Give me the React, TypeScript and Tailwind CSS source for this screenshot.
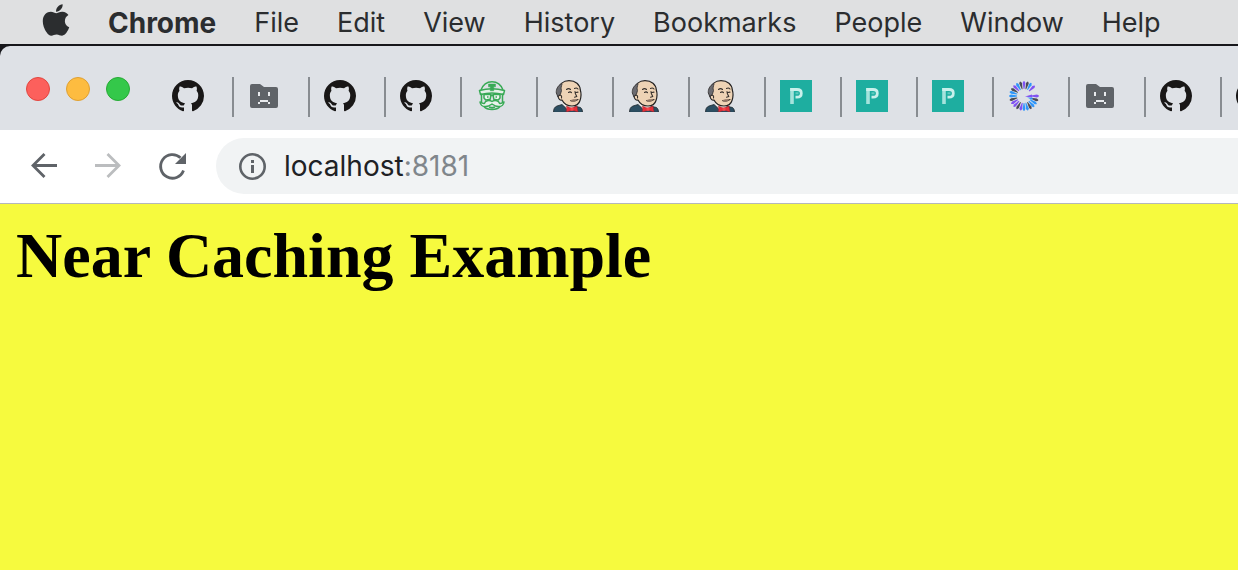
import React from "react";
import { FaApple } from "react-icons/fa";

const ui = "font-['Inter','Liberation_Sans',sans-serif]";

const menus = ["File", "Edit", "View", "History", "Bookmarks", "People", "Window", "Help"];

type TabKind = "github" | "crash" | "travis" | "jenkins" | "p" | "burst";

const tabs: TabKind[] = [
  "github", "crash", "github", "github", "travis", "jenkins", "jenkins", "jenkins",
  "p", "p", "p", "burst", "crash", "github", "github",
];

function GithubIcon() {
  return (
    <svg viewBox="0 0 16 16" className="size-8 shrink-0" fill="#191717" aria-hidden="true">
      <path d="M8 0C3.58 0 0 3.58 0 8c0 3.54 2.29 6.53 5.47 7.59.4.07.55-.17.55-.38 0-.19-.01-.82-.01-1.49-2.01.37-2.53-.49-2.69-.94-.09-.23-.48-.94-.82-1.13-.28-.15-.68-.52-.01-.53.63-.01 1.08.58 1.23.82.72 1.21 1.87.87 2.33.66.07-.52.28-.87.51-1.07-1.78-.2-3.64-.89-3.64-3.95 0-.87.31-1.59.82-2.15-.08-.2-.36-1.02.08-2.12 0 0 .67-.21 2.2.82.64-.18 1.32-.27 2-.27s1.36.09 2 .27c1.53-1.04 2.2-.82 2.2-.82.44 1.1.16 1.92.08 2.12.51.56.82 1.27.82 2.15 0 3.07-1.87 3.75-3.65 3.95.29.25.54.73.54 1.48 0 1.07-.01 1.93-.01 2.2 0 .21.15.46.55.38A8.01 8.01 0 0 0 16 8c0-4.42-3.58-8-8-8z" />
    </svg>
  );
}

function CrashIcon() {
  return (
    <svg viewBox="0 0 32 32" className="size-8 shrink-0" aria-hidden="true">
      <path d="M4 4h8l4 3h12a2 2 0 0 1 2 2v17a2 2 0 0 1-2 2H4a2 2 0 0 1-2-2V6a2 2 0 0 1 2-2z" fill="#5f6368" />
      <path d="M10 12h2v4h-2zM20 12h2v4h-2zM12 20h8v2h-8zM10 22h2v2h-2zM20 22h2v2h-2z" fill="#e8eaed" />
    </svg>
  );
}

function TravisIcon() {
  return (
    <svg viewBox="0 0 32 32" className="size-8 shrink-0" fill="none" stroke="#39aa56" strokeWidth="1.500" strokeLinejoin="round" aria-hidden="true">
      <path d="M5 10C7 4.500 11 1.700 16 1.700S25 4.500 27 10" />
      <path d="M3.500 10.500C11 8.500 21 8.500 28.500 10.500L27.500 14.500C20 12.500 12 12.500 4.500 14.500Z" fill="#e4efe7" />
      <path d="M12.500 4h7v2.800h-1.800v4h-3.400v-4h-1.800z" fill="#39aa56" strokeWidth=".5" />
      <path d="M5.500 13.500V22M26.500 13.500V22" />
      <path d="M8 14.500h7l-.8 4.700-4.500.8L8 18zM17 14.500h7V18l-1.700 2-4.500-.8z" fill="#eef5f0" />
      <path d="M11 17h1.500M19.500 17H21M15 15.500h2" />
      <path d="M16 21.500C13 19.500 9 21 8.500 23.300 7 24 5.500 22.500 4 22c.5 3 2.500 4.500 5 4.500 3 .2 5-1 7-2.500 2 1.500 4 2.700 7 2.500 2.500 0 4.500-1.500 5-4.500-1.500.5-3 2-4.500 1.300C23 21 19 19.500 16 21.500z" fill="#e9f2eb" />
      <path d="M8 26.500C10 29 13 29.500 16 29.500s6-.5 8-3M13 27l3 .8 3-.8" />
    </svg>
  );
}

function JenkinsIcon() {
  return (
    <svg viewBox="0 0 32 32" className="size-8 shrink-0" strokeLinejoin="round" strokeLinecap="round" aria-hidden="true">
      <path d="M1.500 32c0-3 1-5 3.500-6l5-1.500L16 30l8-3.500 4.500 1c1.500 1 2 3 2 4.500z" fill="#2c4e62" stroke="#20282d" strokeWidth=".8" />
      <path d="M10 22l5 7 7-1.500V24z" fill="#f3f1ec" />
      <path d="M6 10C7 4 11.500.7 17 .7 23.500.7 28 4.500 28.300 10c1 3 .9 7-.3 10.500-1 3.500-4 5.500-8 5.500-4.500 0-8-2-10-6-2 .5-3.500-1-4-3.500C6 15 5.500 13 6 10z" fill="#eed3b5" stroke="#252323" strokeWidth="1.200" />
      <path d="M9 3.800C5.500 6 4 9.500 4.300 13l1.700 4 2.500-3 1-3.500C8.500 8.500 9.500 6 10 4z" fill="#6b6b70" stroke="#393737" strokeWidth=".9" />
      <path d="M7 15.500c2-1 3 .5 2.500 2.500M14.500 9.500c1.500-1.300 3-1 4 0M22.500 8.500c1.300-.9 2.500-.6 3.500.5M16.500 12.500c1-.7 2.300-.6 3 .2M24 12.500l2-.4M23 11.500c0 2.500 1.200 3.500 1.800 5l-2.300.7M18.500 20.500c2 .9 5 .3 7.500-1" fill="none" stroke="#35302c" strokeWidth="1.100" />
      <path d="M18 20.500c2-1.500 5-1.200 7-1.500-.8 3-4 4-7 1.500z" fill="#8f7565" />
      <path d="M14.500 26l5 2.200 5.500-2.200 1 6-5.500-1.800-6 1.800z" fill="#e62f39" stroke="#8a2029" strokeWidth=".4" />
      <path d="M18.500 27.500h3v3.300h-3z" fill="#f8484b" />
    </svg>
  );
}

function PIcon() {
  return (
    <svg viewBox="0 0 32 32" className="size-8 shrink-0" fill="none" aria-hidden="true">
      <rect width="32" height="32" fill="#1eaea0" />
      <path d="M12 8v16" stroke="#a5e3dc" strokeWidth="3.600" />
      <path d="M10.200 9.500H17c3 0 4.300 1.500 4.300 3.700S20 17.200 17 17.200h-1.500" stroke="#c9f0eb" strokeWidth="2.800" />
      <path d="M15.500 13.200h3" stroke="#5fc9be" strokeWidth="2" />
    </svg>
  );
}

const purple = "#8052f2";
const blue = "#2f96fa";
const dark = "#4a4a55";
const rays: [number, string][] = [
  [0, purple], [17, dark], [32, blue], [47, blue], [61, dark], [75, blue], [90, blue], [104, purple],
  [119, dark], [134, purple], [149, purple], [164, dark], [180, blue], [196, blue], [210, dark], [225, purple],
  [240, blue], [255, dark], [270, purple], [285, dark], [299, blue], [316, purple],
];

function BurstIcon() {
  return (
    <svg viewBox="0 0 32 32" className="size-8 shrink-0" aria-hidden="true">
      {rays.map(([angle, color]) => (
        <path
          key={angle}
          d="M23 15.600L29 14.600Q33 16 29 17.400L23 16.400z"
          fill={color}
          transform={`rotate(${angle} 16 16)`}
        />
      ))}
      <path d="M17 16.600l7-2v3z" fill={purple} />
      <path d="M19 17.500l6 .3-1 2z" fill={blue} />
    </svg>
  );
}

const icons: Record<TabKind, () => React.JSX.Element> = {
  github: GithubIcon,
  crash: CrashIcon,
  travis: TravisIcon,
  jenkins: JenkinsIcon,
  p: PIcon,
  burst: BurstIcon,
};

const titles: Record<TabKind, string> = {
  github: "GitHub",
  crash: "Page unavailable",
  travis: "Travis CI",
  jenkins: "Jenkins",
  p: "P",
  burst: "Dashboard",
};

export default function App() {
  return (
    <div className={`flex min-h-screen flex-col overflow-hidden bg-[#f6fa3e] ${ui}`}>
      <nav aria-label="Menu bar" className="flex h-11 shrink-0 items-center gap-[38px] bg-[#dfe0e1] pl-[38px] text-[27px] leading-8 text-[#2b2d2f]">
        <button aria-label="Apple menu" className="-mr-1 flex w-9 justify-start pb-1">
          <FaApple className="size-9 shrink-0" />
        </button>
        <button className="pt-0.5 text-[28px] font-bold">Chrome</button>
        {menus.map((m) => (
          <button key={m} className="pt-0.5">{m}</button>
        ))}
      </nav>

      <div className="shrink-0 bg-[#17171b] pt-0.5">
        <div className="flex h-[84px] items-start overflow-hidden rounded-tl-[10px] bg-[#dee1e6] pt-[31px]">
          <div className="flex w-[158px] shrink-0 gap-4 pl-[26px]">
            <button aria-label="Close" className="size-6 rounded-full border border-[#e2463f] bg-[#fc605c]" />
            <button aria-label="Minimize" className="size-6 rounded-full border border-[#dfa032] bg-[#fdbc40]" />
            <button aria-label="Zoom" className="size-6 rounded-full border border-[#27aa35] bg-[#34c84a]" />
          </div>
          <div role="tablist" className="flex">
            {tabs.map((t, i) => {
              const Icon = icons[t];
              return (
                <button
                  key={i}
                  role="tab"
                  aria-label={titles[t]}
                  className="flex h-10 w-[76px] shrink-0 items-center border-r-2 border-[#888c91] pb-0.5 pl-3.5"
                >
                  <Icon />
                </button>
              );
            })}
          </div>
        </div>
      </div>

      <div className="flex h-[74px] shrink-0 items-center border-b border-[#b5b7ba] bg-white pl-7 pb-px text-[#5f6368]">
        <div className="flex shrink-0 gap-8">
          <button aria-label="Back">
            <svg viewBox="0 0 32 32" className="size-8" fill="none" stroke="currentColor" strokeWidth="2.800" aria-hidden="true">
              <path d="M29 15.500H5M16.500 4L5 15.500 16.500 27" />
            </svg>
          </button>
          <button aria-label="Forward" className="text-[#bbbdbf]">
            <svg viewBox="0 0 32 32" className="size-8" fill="none" stroke="currentColor" strokeWidth="2.800" aria-hidden="true">
              <path d="M3 15.500h24M15.500 4L27 15.500 15.500 27" />
            </svg>
          </button>
          <button aria-label="Reload">
            <svg viewBox="0 0 32 32" className="size-8" fill="none" aria-hidden="true">
              <path d="M27.500 20.500A11.800 11.800 0 1 1 24.500 7.800" stroke="currentColor" strokeWidth="2.800" />
              <path d="M30 3v11H19z" fill="currentColor" />
            </svg>
          </button>
        </div>
        <div className="ml-7 flex h-14 flex-1 items-center rounded-l-full bg-[#f1f3f4] pl-5">
          <svg viewBox="0 0 32 32" className="size-8 shrink-0" fill="none" aria-hidden="true">
            <circle cx="16.500" cy="16.500" r="12.200" stroke="currentColor" strokeWidth="2.600" />
            <path d="M15 10h3v3h-3zM15 15h3v8h-3z" fill="currentColor" />
          </svg>
          <div role="textbox" aria-label="Address" className="pl-4 text-[28px] leading-8 text-[#202124]">
            localhost<span className="text-[#80868b]">:8181</span>
          </div>
        </div>
      </div>

      <main className="flex-1 px-4 pt-[15px]">
        <h1 className="font-['Liberation_Serif',serif] text-[64px] leading-[74px] font-bold text-black">
          Near Caching Example
        </h1>
      </main>
    </div>
  );
}
